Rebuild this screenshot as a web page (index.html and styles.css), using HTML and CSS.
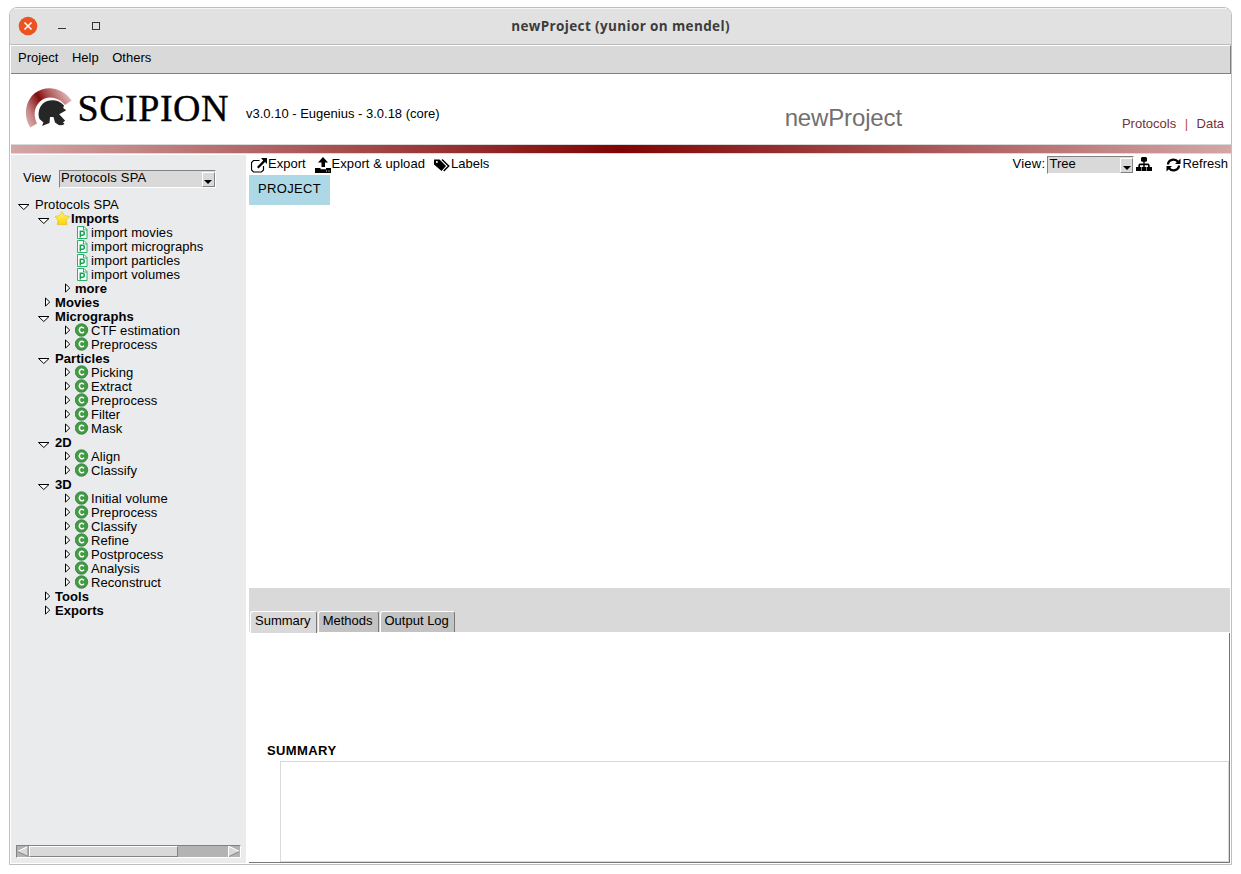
FILE: index.html
```
<!DOCTYPE html>
<html lang="en">
<head>
<meta charset="utf-8">
<title>newProject (yunior on mendel)</title>
<link rel="stylesheet" href="styles.css">
</head>
<body>
<svg class="defs" width="0" height="0">
  <symbol id="down" viewBox="0 0 12 14"><path d="M.5 7.500h10.500L5.800 12.500z" fill="#fff" stroke="#000"/></symbol>
  <symbol id="right" viewBox="0 0 12 14"><path d="M7.500 3v8.200L11.700 7z" fill="#fff" stroke="#000"/></symbol>
  <symbol id="cat" viewBox="0 0 16 14"><circle cx="6.500" cy="7" r="6.300" fill="#409b41" stroke="#2f7a43" stroke-width=".7"/><path d="M8.900 5.400C7.500 3.400 4.300 4 4.300 7s3.200 3.600 4.600 1.600" fill="none" stroke="#fff" stroke-width="1.600"/></symbol>
  <symbol id="prot" viewBox="0 0 16 14"><path d="M2.500 1.500h6.500l3 3v9H2.500z" fill="#fff" stroke="#2bb069"/><path d="M8.500 1.500v3.500h3.500" fill="none" stroke="#2bb069"/><path d="M5.300 12.500V6.200h2q2 0 2 2t-2 2H5.300" fill="none" stroke="#16a34f" stroke-width="1.500"/></symbol>
  <symbol id="star" viewBox="0 0 16 14"><defs><linearGradient id="gold" x2="0" y2="1"><stop stop-color="#fff27a"/><stop offset=".5" stop-color="#ffe63a"/><stop offset="1" stop-color="#fbd400"/></linearGradient></defs><path d="M7 .6l2.300 4 5.200.9-3.300 3.700.8 4.500H2.300l.7-4.500L-.2 5.500l4.900-.9z" fill="url(#gold)" stroke="#e9bd2b" stroke-width=".7"/></symbol>
</svg>
<main class="window">
  <header class="titlebar">
    <svg class="controls" width="100" height="36" viewBox="0 0 100 36"><circle cx="18" cy="18" r="9.300" fill="#e95420"/><path d="M14.500 14.500l7 7m0-7l-7 7" stroke="#fff" stroke-width="1.500"/><path d="M48 20.500h8" stroke="#333"/><rect x="82.500" y="14.500" width="7" height="7" fill="none" stroke="#333"/></svg>
    <h1 class="title">newProject (yunior on mendel)</h1>
  </header>
  <nav class="menubar"><span>Project</span><span>Help</span><span>Others</span></nav>
  <section class="banner">
    <svg class="logo" width="220" height="70" viewBox="0 0 220 70">
      <defs><linearGradient id="crest" gradientUnits="userSpaceOnUse" x1="16" y1="50" x2="61" y2="24"><stop stop-color="#dcb4b4"/><stop offset=".18" stop-color="#c68484"/><stop offset=".47" stop-color="#800c0c"/><stop offset=".62" stop-color="#a84848"/><stop offset="1" stop-color="#e0bcbc"/></linearGradient></defs>
      <path d="M20.300 53.500C13 42 15 27 25 19 36 11 52 13 61.700 26.500L55 31C49 23 37 20.500 30 27.500 23.500 34 23.500 42 27 49.500z" fill="url(#crest)"/>
      <path d="M29.500 45C27.500 40 29 33 33 29.500 39 24.500 49 25.500 54 31.500l-.8 2.500 3 2.200-7 4 6 6.600-2.200 1.400 1.500 1.800q-4.500 3-9.500-1.500l-1.500-5.500h-3.500l-.5 6-7.500 3 1.500-3.500z" fill="#262626"/>
      <text class="logo-text" x="67.500" y="46.500" textLength="151" lengthAdjust="spacing">SCIPION</text>
    </svg>
    <span class="version">v3.0.10 - Eugenius - 3.0.18 (core)</span>
    <span class="project">newProject</span>
    <span class="links"><span>Protocols</span><span class="bar">|</span><span>Data</span></span>
  </section>
  <div class="stripe"></div>
  <div class="body">
    <aside class="side">
      <div class="chooser"><span>View</span><div class="combo wide"><span>Protocols SPA</span><i class="arrow"><svg width="8" height="4" viewBox="0 0 8 4"><path d="M0 0h8L4 4z"/></svg></i></div></div>
      <ul class="tree">
        <li><svg class="tw"><use href="#down"/></svg>Protocols SPA</li>
        <li class="l1"><svg class="tw"><use href="#down"/></svg><svg class="ic"><use href="#star"/></svg>Imports</li>
        <li class="l2"><svg class="tw"></svg><svg class="ic"><use href="#prot"/></svg>import movies</li>
        <li class="l2"><svg class="tw"></svg><svg class="ic"><use href="#prot"/></svg>import micrographs</li>
        <li class="l2"><svg class="tw"></svg><svg class="ic"><use href="#prot"/></svg>import particles</li>
        <li class="l2"><svg class="tw"></svg><svg class="ic"><use href="#prot"/></svg>import volumes</li>
        <li class="l2 bold"><svg class="tw"><use href="#right"/></svg>more</li>
        <li class="l1"><svg class="tw"><use href="#right"/></svg>Movies</li>
        <li class="l1"><svg class="tw"><use href="#down"/></svg>Micrographs</li>
        <li class="l2"><svg class="tw"><use href="#right"/></svg><svg class="ic"><use href="#cat"/></svg>CTF estimation</li>
        <li class="l2"><svg class="tw"><use href="#right"/></svg><svg class="ic"><use href="#cat"/></svg>Preprocess</li>
        <li class="l1"><svg class="tw"><use href="#down"/></svg>Particles</li>
        <li class="l2"><svg class="tw"><use href="#right"/></svg><svg class="ic"><use href="#cat"/></svg>Picking</li>
        <li class="l2"><svg class="tw"><use href="#right"/></svg><svg class="ic"><use href="#cat"/></svg>Extract</li>
        <li class="l2"><svg class="tw"><use href="#right"/></svg><svg class="ic"><use href="#cat"/></svg>Preprocess</li>
        <li class="l2"><svg class="tw"><use href="#right"/></svg><svg class="ic"><use href="#cat"/></svg>Filter</li>
        <li class="l2"><svg class="tw"><use href="#right"/></svg><svg class="ic"><use href="#cat"/></svg>Mask</li>
        <li class="l1"><svg class="tw"><use href="#down"/></svg>2D</li>
        <li class="l2"><svg class="tw"><use href="#right"/></svg><svg class="ic"><use href="#cat"/></svg>Align</li>
        <li class="l2"><svg class="tw"><use href="#right"/></svg><svg class="ic"><use href="#cat"/></svg>Classify</li>
        <li class="l1"><svg class="tw"><use href="#down"/></svg>3D</li>
        <li class="l2"><svg class="tw"><use href="#right"/></svg><svg class="ic"><use href="#cat"/></svg>Initial volume</li>
        <li class="l2"><svg class="tw"><use href="#right"/></svg><svg class="ic"><use href="#cat"/></svg>Preprocess</li>
        <li class="l2"><svg class="tw"><use href="#right"/></svg><svg class="ic"><use href="#cat"/></svg>Classify</li>
        <li class="l2"><svg class="tw"><use href="#right"/></svg><svg class="ic"><use href="#cat"/></svg>Refine</li>
        <li class="l2"><svg class="tw"><use href="#right"/></svg><svg class="ic"><use href="#cat"/></svg>Postprocess</li>
        <li class="l2"><svg class="tw"><use href="#right"/></svg><svg class="ic"><use href="#cat"/></svg>Analysis</li>
        <li class="l2"><svg class="tw"><use href="#right"/></svg><svg class="ic"><use href="#cat"/></svg>Reconstruct</li>
        <li class="l1"><svg class="tw"><use href="#right"/></svg>Tools</li>
        <li class="l1"><svg class="tw"><use href="#right"/></svg>Exports</li>
      </ul>
      <div class="scroll">
        <svg width="12" height="11" viewBox="0 0 12 11"><path d="M0 5.500L11 0v11z" fill="#d9d9d9"/><path d="M11 .5L.5 5.500" stroke="#fff"/><path d="M.5 5.500L11 10.500V0" fill="none" stroke="#828282"/></svg>
        <i class="thumb"></i>
        <svg class="end" width="12" height="11" viewBox="0 0 12 11"><path d="M1 0l11 5.500L1 11z" fill="#d9d9d9"/><path d="M.5 11V0l11 5.500" fill="none" stroke="#fff"/><path d="M11.500 5.500L1 10.500" stroke="#828282"/></svg>
      </div>
    </aside>
    <section class="content">
      <div class="toolbar">
        <span class="tool"><svg width="17" height="16" viewBox="0 0 17 16"><path d="M8.500 3.500H2.500l-2 2v7.500l2 2h8l2-2V9" fill="none" stroke="#000" stroke-width="1.200"/><path d="M10 1h6v6l-2-2-6.500 6.500L6 10l6.200-6.500z"/></svg>Export</span>
        <span class="tool up"><svg width="17" height="16" viewBox="0 0 17 16"><path d="M8 0l5 5.500H10V10H6.500V5.500H3zM0 11h5.500v1.300h5.500V11H16v5H0z"/><path d="M11 14h1m1.500 0h1" stroke="#fff"/></svg>Export &amp; upload</span>
        <span class="tool tag"><svg width="17" height="16" viewBox="0 0 17 16"><path d="M0 2.500h5.500L12 9l-4.500 5L0 7.500z"/><path d="M8 2.500l6.700 6.500-5 5" fill="none" stroke="#000" stroke-width="1.500"/><circle cx="2.900" cy="5" r="1" fill="#fff"/></svg>Labels</span>
        <span class="viewlabel">View:</span>
        <div class="combo narrow"><span>Tree</span><i class="arrow"><svg width="8" height="4" viewBox="0 0 8 4"><path d="M0 0h8L4 4z"/></svg></i></div>
        <svg class="sitemap" width="16" height="14" viewBox="0 0 16 14"><path d="M6 0h4l1 1v3l-1 .8H8.700V6.500H12.500L13.700 8v2H16v4h-5v-4h1V8.200H8.700V10h1.800v4h-5v-4h1.800V8.200H4V10h1v4H0v-4h2.300V8l1.200-1.500h3.800V4.800H6L5 4V1z"/></svg>
        <span class="tool refresh"><svg width="16" height="16" viewBox="0 0 16 16"><path d="M2 7.500C2.200 2.500 9 .8 12.200 5M13 8.500C12.700 13.500 6 15 2.800 11" fill="none" stroke="#000" stroke-width="2.300"/><path d="M14.500 1.500V7H9zM.5 14.500V9H6z"/></svg>Refresh</span>
      </div>
      <div class="canvas"><div class="node">PROJECT</div></div>
      <div class="tabs"><span class="tab active">Summary</span><span class="tab">Methods</span><span class="tab">Output Log</span></div>
      <div class="pane"><h2>SUMMARY</h2><div class="summary"></div></div>
    </section>
  </div>
</main>
</body>
</html>
```
FILE: styles.css
```
* { box-sizing: border-box; }
body { margin: 0; background: #fff; color: #000; font: 13px/14px "Liberation Sans", Arial, sans-serif; }
.defs { position: absolute; }
svg { display: block; flex: none; }
.window { width: 1223px; height: 858px; margin: 7px 0 0 9px; border: 1px solid #bfbfbf; border-radius: 8px 8px 0 0; overflow: hidden; display: flex; flex-direction: column; }
.titlebar { height: 37px; flex: none; border-top: 1px solid #f5f5f5; border-bottom: 1px solid #bbb; background: #e1e1e1; display: flex; }
.titlebar .controls { margin-top: -1px; }
.title { flex: 1; margin: 0 100px 0 0; text-align: center; font: bold 13.5px/35px "Open Sans", "Noto Sans", sans-serif; letter-spacing: .37px; color: #3c3c3c; }
.menubar { height: 29px; flex: none; margin-left: 1px; border-top: 1px solid #fff; border-bottom: 1px solid #808080; border-right: 1px solid #808080; background: #d9d9d9; padding: 5px 7px; display: flex; gap: 13.5px; }
.banner { height: 70px; flex: none; display: flex; }
.logo-text { font: 38px "Liberation Serif", serif; stroke: #000; stroke-width: .35px; }
.version { margin: 33px 0 0 16px; }
.project { margin: 31px 0 0 345px; font-size: 24px; line-height: 26px; letter-spacing: -.15px; color: #707070; }
.links { margin: 43px 7px 0 auto; display: flex; gap: 8.5px; color: #733238; }
.links .bar { color: #c0503c; }
.stripe { height: 10px; flex: none; margin-left: 1px; border-top: 1px solid #d9d9d9; border-bottom: 1px solid #d9d9d9; background: linear-gradient(90deg, #d4a6a6, #800404 50%, #d4a6a6); }
.body { flex: 1; display: flex; padding-top: 1px; min-height: 0; }
.side { width: 235px; flex: none; margin: 0 0 1px 1px; background: #e9ebed; display: flex; flex-direction: column; }
.chooser { display: flex; gap: 8px; padding: 15px 0 0 12px; line-height: 16px; }
.combo { height: 18px; border: 1px solid #828282; border-right-color: #fff; border-bottom-color: #fff; background: #d9d9d9; display: flex; justify-content: space-between; padding-left: 1px; line-height: 14px; }
.wide { width: 157px; letter-spacing: .2px; }
.narrow { width: 87px; }
.arrow { width: 13px; height: 15px; margin-top: 1px; background: #d9d9d9; border: 1px solid #fff; border-right-color: #828282; border-bottom-color: #828282; display: flex; align-items: flex-end; justify-content: center; padding-bottom: 2px; }
.tree { list-style: none; margin: 9px 0 0; padding: 0 0 0 7px; flex: 1; line-height: 16px; letter-spacing: .06px; }
.tree li { display: flex; height: 14px; }
.tree .l1 { padding-left: 20px; font-weight: bold; }
.tree .l2 { padding-left: 40px; }
.tree .bold { font-weight: bold; }
.tw { width: 12px; height: 14px; margin-right: 5px; }
.ic { width: 16px; height: 14px; }
.scroll { height: 13px; width: 225px; margin: 0 0 5px 5px; background: #b3b3b3; border: 1px solid #828282; border-right-color: #fff; border-bottom-color: #fff; display: flex; }
.thumb { width: 149px; height: 11px; background: #d9d9d9; border: 1px solid #fff; border-right-color: #828282; border-bottom-color: #828282; }
.end { margin-left: auto; }
.content { flex: 1; margin-left: 3px; display: flex; flex-direction: column; }
.toolbar { height: 20px; display: flex; align-items: flex-start; padding: 1px 3px 0 2px; line-height: 16px; }
.tool { display: flex; }
.tool svg { margin-top: 1px; }
.up { margin-left: 9px; letter-spacing: .06px; }
.tag { margin-left: 9px; }
.viewlabel { margin: 0 2px 0 auto; letter-spacing: .3px; }
.sitemap { margin: 1px 14px 0 2px; }
.canvas { flex: 1; }
.node { width: 81px; height: 30px; background: #add8e6; text-align: center; line-height: 27px; letter-spacing: .35px; }
.tabs { height: 44px; width: 981px; background: #d9d9d9; padding: 23px 0 0 1px; display: flex; gap: 1px; }
.tab { height: 21px; padding: 2px 5px 0 4px; background: #c3c3c3; border: 1px solid #fff; border-right-color: #777; border-bottom: 0; border-radius: 3px 3px 0 0; white-space: nowrap; }
.active { height: 22px; background: #d9d9d9; }
.pane { height: 230px; width: 981px; margin-top: 1px; margin-bottom: 1px; border-right: 1px solid #777; border-bottom: 1px solid #777; padding: 111px 0 0 18px; }
.pane h2 { margin: 0; font-size: 13px; line-height: 14px; letter-spacing: .4px; }
.summary { height: 101px; margin: 3px 0 0 13px; border: 1px solid #d9d9d9; }
```
